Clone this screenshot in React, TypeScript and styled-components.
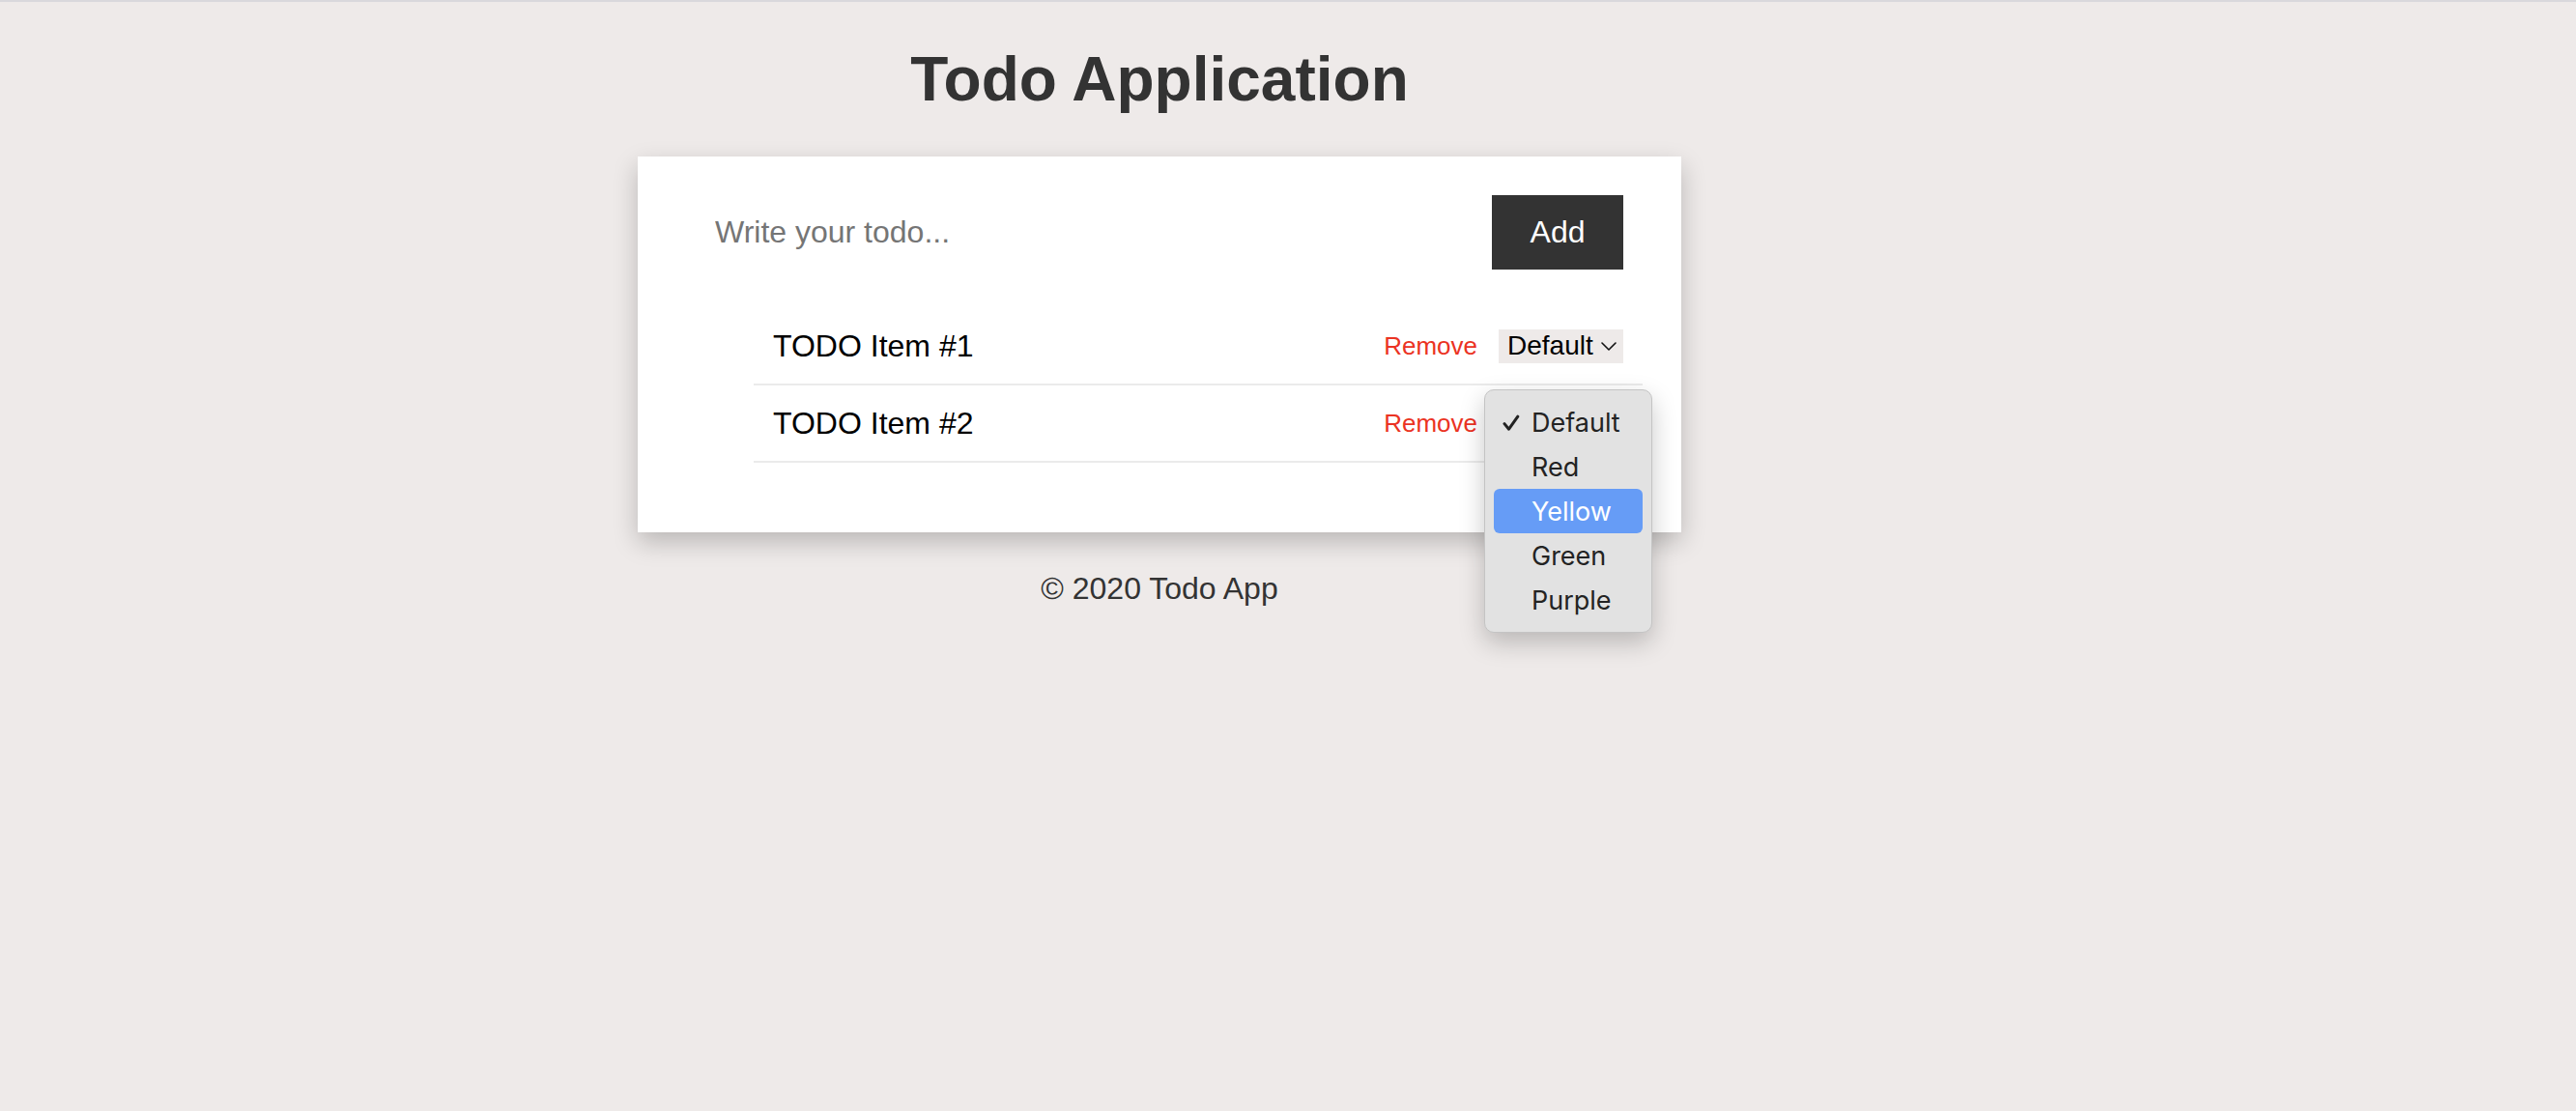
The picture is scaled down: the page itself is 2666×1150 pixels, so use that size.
import React from "react";
import styled, { createGlobalStyle } from "styled-components";

const GlobalStyle = createGlobalStyle`
  html, body {
    margin: 0;
    padding: 0;
    background: #eeeae9;
  }
  body {
    font-family: "Liberation Sans", Arial, Helvetica, sans-serif;
    min-height: 1150px;
  }
`;

const BrowserEdge = styled.div`
  height: 2px;
  background: #d9d8dc;
`;

const Page = styled.div`
  width: 2400px;
  display: flex;
  flex-direction: column;
  align-items: center;
`;

const Title = styled.h1`
  margin: 43px 0 43px;
  font-size: 64px;
  line-height: 74px;
  font-weight: 700;
  color: #333;
`;

const Card = styled.main`
  width: 1080px;
  box-sizing: border-box;
  background: #fff;
  padding: 40px 40px 72px 60px;
  box-shadow: 0 10px 24px rgba(0, 0, 0, 0.22);
`;

const Form = styled.form`
  display: flex;
  align-items: center;
  height: 77px;
  padding-right: 20px;
`;

const TodoInput = styled.input`
  flex: 1;
  height: 100%;
  border: none;
  outline: none;
  background: transparent;
  padding: 0 20px;
  font-family: "Liberation Sans", Arial, sans-serif;
  font-size: 32px;
  color: #333;
  &::placeholder {
    color: #757575;
  }
`;

const AddButton = styled.button`
  width: 136px;
  height: 77px;
  border: none;
  background: #333;
  color: #fff;
  font-family: "Liberation Sans", Arial, sans-serif;
  font-size: 32px;
  padding: 0;
  cursor: pointer;
`;

const List = styled.ul`
  list-style: none;
  margin: 40px 0 0 60px;
  padding: 0;
`;

const Item = styled.li`
  display: flex;
  align-items: center;
  justify-content: space-between;
  height: 78px;
  padding: 0 20px;
  border-bottom: 2px solid #ebebeb;
  font-size: 32px;
  color: #000;
`;

const Actions = styled.div`
  display: flex;
  align-items: center;
  gap: 22px;
`;

const RemoveButton = styled.button`
  border: none;
  background: none;
  padding: 0;
  color: #eb3323;
  font-family: "Liberation Sans", Arial, sans-serif;
  font-size: 26px;
  cursor: pointer;
`;

const SelectWrap = styled.div`
  position: relative;
`;

const SelectBox = styled.div`
  display: flex;
  align-items: center;
  justify-content: space-between;
  width: 129px;
  height: 35px;
  box-sizing: border-box;
  padding: 0 7px 0 9px;
  background: #eeeae9;
  font-size: 28px;
  color: #000;
`;

const Menu = styled.div`
  position: absolute;
  top: 62px;
  left: -15px;
  z-index: 10;
  width: 174px;
  box-sizing: border-box;
  padding: 10px 9px;
  background: #e2e2e2;
  border: 1px solid #c4c4c4;
  border-radius: 10px;
  box-shadow: 0 10px 26px rgba(0, 0, 0, 0.22);
`;

const MenuOption = styled.div<{ $active?: boolean }>`
  display: flex;
  align-items: center;
  height: 46px;
  padding: 2px 0 0 9px;
  box-sizing: border-box;
  border-radius: 6px;
  font-family: Inter, "Noto Sans", sans-serif;
  font-size: 27px;
  color: ${(p) => (p.$active ? "#fff" : "#232323")};
  background: ${(p) => (p.$active ? "#669cf6" : "transparent")};
`;

const CheckSlot = styled.span`
  display: flex;
  align-items: center;
  width: 30px;
  height: 100%;
`;

const Footer = styled.footer`
  margin-top: 40px;
  font-size: 32px;
  color: #333;
`;

const Chevron = () => (
  <svg width="16" height="9" viewBox="0 0 16 9" fill="none">
    <path d="M1 1 L8 8 L15 1" stroke="#111" strokeWidth="1.6" strokeLinecap="round" strokeLinejoin="round" />
  </svg>
);

const Check = () => (
  <svg width="18" height="18" viewBox="0 0 18 18" fill="none">
    <path d="M2 9.6 L6.6 15.2 L15.8 2.2" stroke="#222" strokeWidth="3" strokeLinecap="round" strokeLinejoin="round" />
  </svg>
);

const options = ["Default", "Red", "Yellow", "Green", "Purple"];

export default function App() {
  return (
    <>
      <GlobalStyle />
      <BrowserEdge />
      <Page>
        <Title>Todo Application</Title>
        <Card>
          <Form onSubmit={(e) => e.preventDefault()}>
            <TodoInput placeholder="Write your todo..." />
            <AddButton type="submit">Add</AddButton>
          </Form>
          <List>
            <Item>
              <span>TODO Item #1</span>
              <Actions>
                <RemoveButton>Remove</RemoveButton>
                <SelectWrap>
                  <SelectBox>
                    <span>Default</span>
                    <Chevron />
                  </SelectBox>
                  <Menu>
                    {options.map((o) => (
                      <MenuOption key={o} $active={o === "Yellow"}>
                        <CheckSlot>{o === "Default" ? <Check /> : null}</CheckSlot>
                        {o}
                      </MenuOption>
                    ))}
                  </Menu>
                </SelectWrap>
              </Actions>
            </Item>
            <Item>
              <span>TODO Item #2</span>
              <Actions>
                <RemoveButton>Remove</RemoveButton>
                <SelectWrap>
                  <SelectBox>
                    <span>Default</span>
                    <Chevron />
                  </SelectBox>
                </SelectWrap>
              </Actions>
            </Item>
          </List>
        </Card>
        <Footer>© 2020 Todo App</Footer>
      </Page>
    </>
  );
}
